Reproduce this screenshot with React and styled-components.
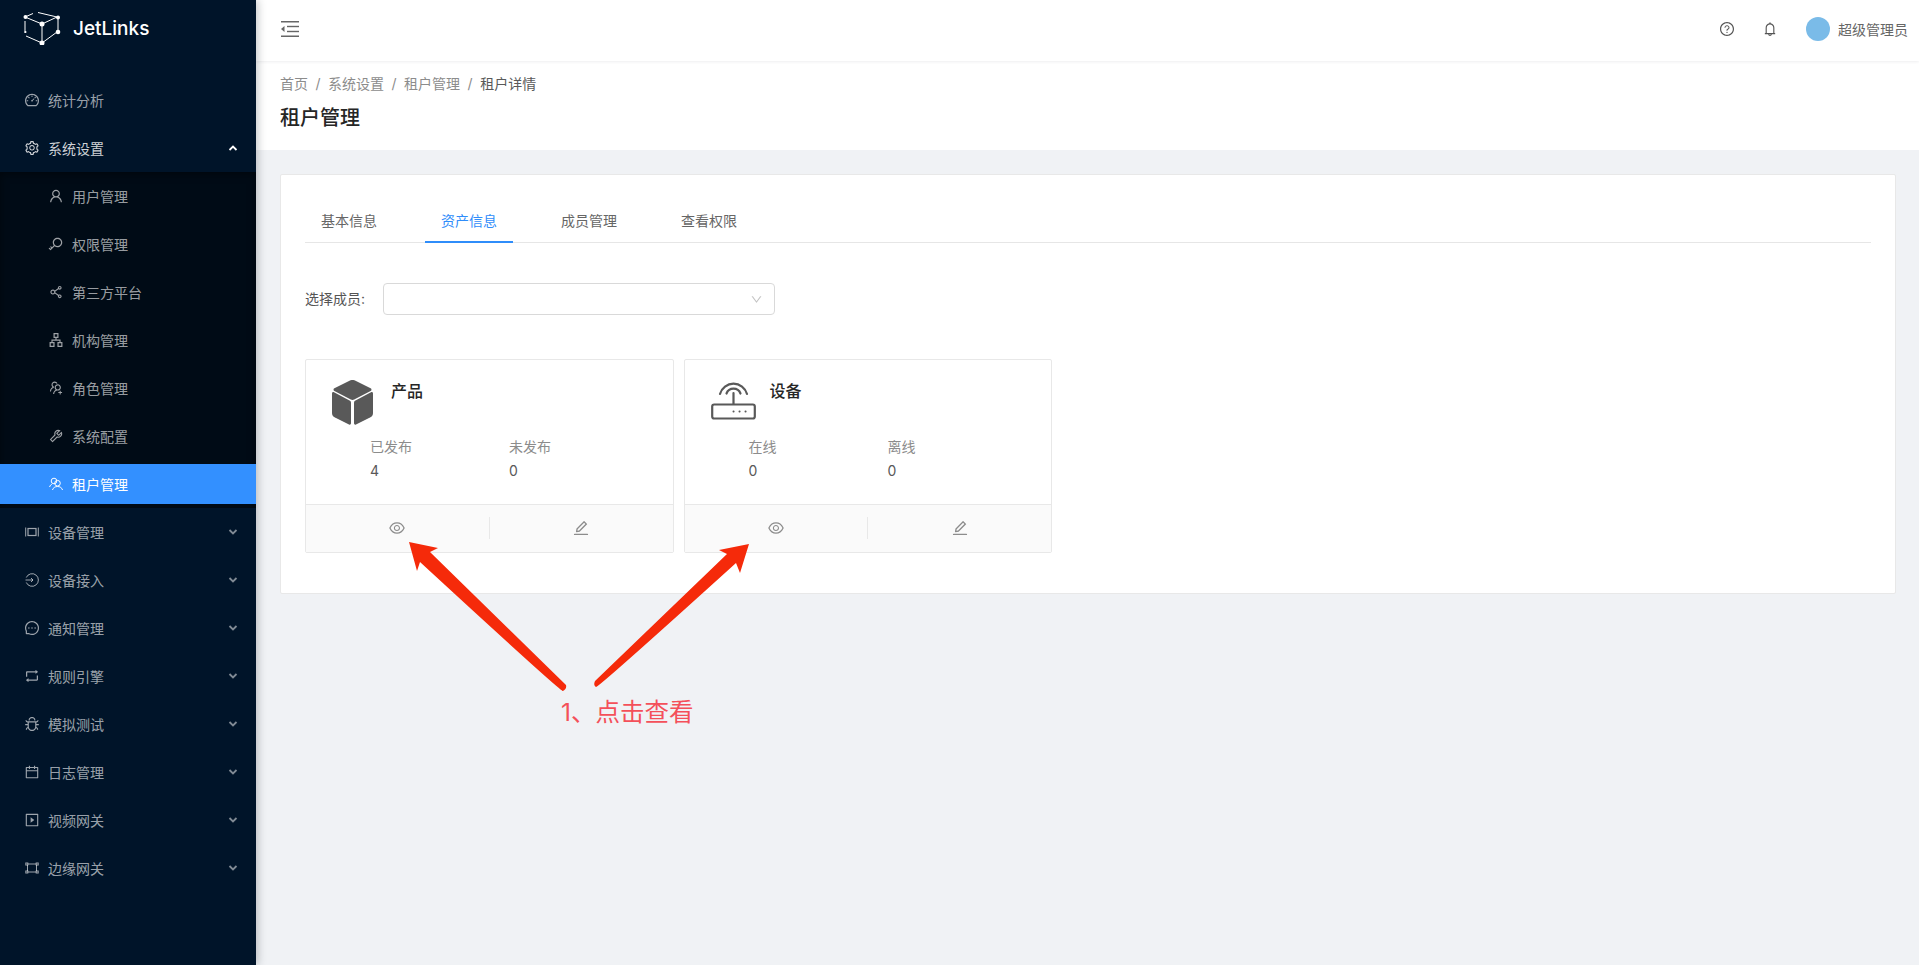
import React from 'react';
import styled, { createGlobalStyle } from 'styled-components';
import {
  AiOutlineDashboard, AiOutlineSetting, AiOutlineUser, AiOutlineKey, AiOutlineShareAlt,
  AiOutlineApartment, AiOutlineUsergroupAdd, AiOutlineTool, AiOutlineMessage, AiOutlineRetweet,
  AiOutlineBug, AiOutlineCalendar, AiOutlinePlaySquare, AiOutlineQuestionCircle, AiOutlineBell,
  AiOutlineEye, AiOutlineEdit, AiOutlineDown,
} from 'react-icons/ai';

const FONT = `"Inter", "Liberation Sans", "Noto Sans CJK SC", sans-serif`;

const Global = createGlobalStyle`
  html, body { margin: 0; padding: 0; height: 100%; overflow: hidden; }
  body { font-family: ${FONT}; background: #f0f2f5; }
  #root { height: 100%; }
  * { box-sizing: border-box; }
`;

const Shell = styled.div`
  position: relative;
  display: flex;
  width: 1919px;
  height: 965px;
  overflow: hidden;
`;

const Sider = styled.aside`
  width: 256px;
  flex: none;
  background: #001429;
  box-shadow: 2px 0 8px rgba(29, 35, 41, 0.25);
  position: relative;
  z-index: 2;
`;

const Logo = styled.div`
  height: 60px;
  padding: 11px 0 0 23px;
  display: flex;
  align-items: flex-start;
  gap: 12px;
  color: #fff;
  font-size: 19px;
  font-weight: 500;
`;

const LogoText = styled.span`
  line-height: 35px;
`;

const Menu = styled.nav`
  padding-top: 20px;
`;

const Item = styled.div`
  height: 40px;
  margin: 0 0 8px;
  display: flex;
  align-items: center;
  padding-left: ${p => (p.$sub ? 48 : 24)}px;
  padding-right: 18px;
  font-size: 14px;
  color: ${p => (p.$active ? '#fff' : p.$open ? 'rgba(255,255,255,0.82)' : 'rgba(255,255,255,0.62)')};
  background: ${p => (p.$active ? '#3390ff' : 'transparent')};
  svg.lead { width: 16px; height: 16px; flex: none; margin-right: 8px; }
`;

const Label = styled.span`
  flex: 1;
  white-space: nowrap;
`;

const SubList = styled.div`
  background: #000b16;
  box-shadow: inset 0 2px 8px rgba(0, 0, 0, 0.45);
  margin: -4px 0 4px;
  padding: 4px 0;
  & > div { margin-bottom: 8px; }
  & > div:last-child { margin-bottom: 0; }
`;

const Chevron = styled.span`
  display: flex;
  color: ${p => (p.$open ? '#fff' : 'rgba(255,255,255,0.5)')};
`;

const Main = styled.div`
  flex: 1;
  min-width: 0;
  display: flex;
  flex-direction: column;
`;

const Header = styled.header`
  height: 61px;
  flex: none;
  background: #fff;
  box-shadow: 0 1px 3px rgba(0, 21, 41, 0.07);
  display: flex;
  align-items: center;
  padding: 0 11px 3px 25px;
  position: relative;
  z-index: 1;
`;

const Spacer = styled.div`
  flex: 1;
`;

const HeaderIcon = styled.span`
  display: flex;
  width: 16px;
  justify-content: center;
  font-size: ${p => p.$size || 16}px;
  color: #555;
  margin-right: 27px;
`;

const Avatar = styled.span`
  width: 24px;
  height: 24px;
  border-radius: 50%;
  background: #7abbe8;
  margin-left: 1px;
  margin-right: 8px;
`;

const UserName = styled.span`
  font-size: 14px;
  color: #666;
`;

const PageHead = styled.div`
  height: 89px;
  flex: none;
  background: #fff;
  padding: 13px 24px 0;
`;

const Crumbs = styled.div`
  display: flex;
  align-items: center;
  font-size: 14px;
  line-height: 20px;
  color: #8c8c8c;
`;

const Sep = styled.span`
  margin: 0 7.5px;
  color: #8c8c8c;
`;

const CrumbLast = styled.span`
  color: #595959;
`;

const PageTitle = styled.div`
  font-size: 20px;
  font-weight: 500;
  line-height: 28px;
  margin-top: 10px;
  color: #262626;
`;

const Content = styled.main`
  flex: 1;
  padding: 24px 23px 0 24px;
`;

const Panel = styled.section`
  height: 420px;
  background: #fff;
  border: 1px solid #e8e8e8;
  border-radius: 2px;
  padding: 24px 24px;
`;

const Tabs = styled.div`
  display: flex;
  height: 44px;
  border-bottom: 1px solid #e6e6e6;
`;

const Tab = styled.div`
  width: 88px;
  margin-right: 32px;
  margin-bottom: -1px;
  display: flex;
  justify-content: center;
  align-items: center;
  font-size: 14px;
  color: ${p => (p.$active ? '#2f8dfa' : '#666')};
  border-bottom: 2px solid ${p => (p.$active ? '#2f8dfa' : 'transparent')};
`;

const FilterRow = styled.div`
  display: flex;
  align-items: center;
  margin-top: 40px;
  font-size: 14px;
  color: #555;
`;

const FilterLabel = styled.span`
  width: 78px;
  white-space: nowrap;
  padding-bottom: 2px;
`;

const Select = styled.div`
  width: 392px;
  height: 32px;
  border: 1px solid #d9d9d9;
  border-radius: 4px;
  background: #fff;
  display: flex;
  justify-content: flex-end;
  align-items: center;
  padding-right: 11px;
  color: #c4c4c4;
  font-size: 13px;
`;

const Cards = styled.div`
  display: flex;
  gap: 10px;
  margin-top: 44px;
`;

const Card = styled.article`
  width: 368.5px;
  height: 194px;
  border: 1px solid #e8e8e8;
  border-radius: 2px;
  display: flex;
  flex-direction: column;
`;

const CardBody = styled.div`
  flex: 1;
  padding: 20px 0 0 26px;
  position: relative;
`;

const CardTop = styled.div`
  display: flex;
  height: 57px;
  align-items: flex-start;
`;

const CardIcon = styled.div`
  width: 59px;
  flex: none;
  display: flex;
`;

const CardTitle = styled.div`
  font-size: 16px;
  font-weight: 500;
  color: #262626;
  line-height: 22px;
`;

const Stats = styled.div`
  display: flex;
  margin-left: 38px;
`;

const Stat = styled.div`
  width: 139px;
`;

const StatLabel = styled.div`
  font-size: 14px;
  line-height: 20px;
  color: #8c8c8c;
`;

const StatValue = styled.div`
  font-size: 14px;
  line-height: 20px;
  margin-top: 4px;
  color: #595959;
`;

const Actions = styled.div`
  height: 48px;
  flex: none;
  background: #fafafa;
  border-top: 1px solid #e8e8e8;
  display: flex;
  align-items: center;
  padding-bottom: 2px;
`;

const Action = styled.div`
  flex: 1;
  height: 22px;
  display: flex;
  justify-content: center;
  align-items: center;
  font-size: 18px;
  color: #8c8c8c;
  & + & { border-left: 1px solid #e8e8e8; }
`;

const Overlay = styled.svg`
  position: absolute;
  inset: 0;
  z-index: 3;
  pointer-events: none;
`;

const Note = styled.div`
  position: absolute;
  left: 561px;
  top: 694px;
  z-index: 3;
  font-size: 24.5px;
  line-height: 36px;
  color: #f4505a;
  white-space: nowrap;
`;

const Line = ({ children }) => (
  <svg className="lead" viewBox="-1 -1 16 16" fill="none" stroke="currentColor" strokeWidth="1">{children}</svg>
);

const Up = () => (
  <svg width="10" height="8" viewBox="0 0 10 8" fill="none" stroke="currentColor" strokeWidth="1.8"><path d="M1.5 6 5 2.5 8.500 6" /></svg>
);
const Dn = () => (
  <svg width="10" height="8" viewBox="0 0 10 8" fill="none" stroke="currentColor" strokeWidth="1.8"><path d="M1.5 2 5 5.500 8.500 2" /></svg>
);

const Logomark = () => (
  <svg width="38" height="34" viewBox="0 0 38 34" fill="none" stroke="#fff" strokeWidth="1">
    <path d="M2 6 10 2.500M15 1.500 34 6M2 6 19 13 34 6M19 13V32M2 10V22M3 25 19 32 34 21M35 7V20" />
    <g fill="#fff" stroke="none">
      <circle cx="2.500" cy="6" r="2" /><circle cx="19" cy="13" r="2.500" /><circle cx="35" cy="6.500" r="2" />
      <circle cx="35" cy="21" r="2.300" /><circle cx="19" cy="32" r="2.500" /><circle cx="2.500" cy="21" r="1" />
    </g>
  </svg>
);

const TenantIcon = () => (
  <Line>
    <circle cx="5" cy="4" r="2.800" /><circle cx="8.500" cy="6.200" r="2.800" />
    <path d="M.6 10C1 8.500 2 7.500 3 7.200M3.500 13C4 10.800 6 9.500 8.500 9.500S13 10.800 13.500 13" />
  </Line>
);
const DeviceIcon = () => (
  <Line>
    <path d="M.7 2.500V11.500M13.300 2.500V11.500" />
    <rect x="3" y="3.500" width="8" height="7" strokeWidth="1.200" />
  </Line>
);
const AccessIcon = () => (
  <Line>
    <path d="M1.300 4.500A6.300 6.300 0 1 1 1.300 9.500M.5 7H8M6 5 8 7 6 9" />
  </Line>
);
const EdgeIcon = () => (
  <Line>
    <path d="M2.800 3H11.200M2.800 11H11.200M2.500 4V10M11.500 4V10" />
    <rect x=".8" y="2" width="2" height="2" /><rect x="11.200" y="2" width="2" height="2" />
    <rect x=".8" y="10" width="2" height="2" /><rect x="11.200" y="10" width="2" height="2" />
  </Line>
);

const CubeIcon = () => (
  <svg width="41" height="45" viewBox="0 0 41 45" fill="#595959">
    <path d="M17.500.8a6 6 0 0 1 6 0L38.600 8.300c1.200.7 1.200 2 0 2.700L22.200 19.500a3.500 3.500 0 0 1-3.400 0L2.400 11c-1.200-.7-1.200-2 0-2.700Z" />
    <path d="M0 13.500c0-1.100 1-1.700 2-1.200L18 20.700c.7.400 1 1 1 1.800V43.300c0 1.100-1 1.700-2 1.200L3 37.500C1 36.500 0 35 0 33Z" />
    <path d="M41 13.500c0-1.100-1-1.700-2-1.200L23 20.700c-.7.400-1 1-1 1.800V43.300c0 1.100 1 1.700 2 1.200L38 37.500C40 36.500 41 35 41 33Z" />
  </svg>
);

const RouterIcon = () => (
  <svg width="45" height="40" viewBox="0 0 45 40" fill="none" stroke="#595959" strokeWidth="2.200" strokeLinecap="round">
    <rect x="1.200" y="24.500" width="42.600" height="14" rx="2" />
    <path d="M22.500 13V24M15.500 13.500a7.500 7.500 0 0 1 14 0M9 14A14 14 0 0 1 36 14" />
    <path d="M22.500 31.500h.1M28.500 31.500h.1M34.500 31.500h.1" strokeWidth="2" />
  </svg>
);

const TriggerIcon = () => (
  <svg width="18" height="16" viewBox="0 0 18 16" fill="#666">
    <rect y="0" width="18" height="1.500" /><rect y="14.500" width="18" height="1.500" />
    <rect x="6" y="4.800" width="12" height="1.400" /><rect x="6" y="9.800" width="12" height="1.400" />
    <path d="M0 8 3.500 5V11Z" />
  </svg>
);

const topMenu = [
  ['设备管理', <DeviceIcon />],
  ['设备接入', <AccessIcon />],
  ['通知管理', <AiOutlineMessage className="lead" />],
  ['规则引擎', <AiOutlineRetweet className="lead" />],
  ['模拟测试', <AiOutlineBug className="lead" />],
  ['日志管理', <AiOutlineCalendar className="lead" />],
  ['视频网关', <AiOutlinePlaySquare className="lead" />],
  ['边缘网关', <EdgeIcon />],
];

const subMenu = [
  ['用户管理', <AiOutlineUser className="lead" />],
  ['权限管理', <AiOutlineKey className="lead" />],
  ['第三方平台', <AiOutlineShareAlt className="lead" />],
  ['机构管理', <AiOutlineApartment className="lead" />],
  ['角色管理', <AiOutlineUsergroupAdd className="lead" />],
  ['系统配置', <AiOutlineTool className="lead" />],
  ['租户管理', <TenantIcon />, true],
];

const cards = [
  { title: '产品', icon: <CubeIcon />, stats: [['已发布', 4], ['未发布', 0]] },
  { title: '设备', icon: <RouterIcon />, stats: [['在线', 0], ['离线', 0]] },
];

export default function App() {
  return (
    <Shell>
      <Global />
      <Sider>
        <Logo>
          <Logomark />
          <LogoText>JetLinks</LogoText>
        </Logo>
        <Menu>
          <Item><AiOutlineDashboard className="lead" /><Label>统计分析</Label></Item>
          <Item $open><AiOutlineSetting className="lead" /><Label>系统设置</Label><Chevron $open><Up /></Chevron></Item>
          <SubList>
            {subMenu.map(([t, ic, active]) => (
              <Item key={t} $sub $active={active}>{ic}<Label>{t}</Label></Item>
            ))}
          </SubList>
          {topMenu.map(([t, ic]) => (
            <Item key={t}>{ic}<Label>{t}</Label><Chevron><Dn /></Chevron></Item>
          ))}
        </Menu>
      </Sider>
      <Main>
        <Header>
          <TriggerIcon />
          <Spacer />
          <HeaderIcon><AiOutlineQuestionCircle /></HeaderIcon>
          <HeaderIcon $size={20}><AiOutlineBell /></HeaderIcon>
          <Avatar />
          <UserName>超级管理员</UserName>
        </Header>
        <PageHead>
          <Crumbs>
            <span>首页</span><Sep>/</Sep>
            <span>系统设置</span><Sep>/</Sep>
            <span>租户管理</span><Sep>/</Sep>
            <CrumbLast>租户详情</CrumbLast>
          </Crumbs>
          <PageTitle>租户管理</PageTitle>
        </PageHead>
        <Content>
          <Panel>
            <Tabs>
              <Tab>基本信息</Tab>
              <Tab $active>资产信息</Tab>
              <Tab>成员管理</Tab>
              <Tab>查看权限</Tab>
            </Tabs>
            <FilterRow>
              <FilterLabel>选择成员:</FilterLabel>
              <Select><AiOutlineDown /></Select>
            </FilterRow>
            <Cards>
              {cards.map(c => (
                <Card key={c.title}>
                  <CardBody>
                    <CardTop>
                      <CardIcon>{c.icon}</CardIcon>
                      <CardTitle>{c.title}</CardTitle>
                    </CardTop>
                    <Stats>
                      {c.stats.map(([l, v]) => (
                        <Stat key={l}>
                          <StatLabel>{l}</StatLabel>
                          <StatValue>{v}</StatValue>
                        </Stat>
                      ))}
                    </Stats>
                  </CardBody>
                  <Actions>
                    <Action><AiOutlineEye /></Action>
                    <Action><AiOutlineEdit /></Action>
                  </Actions>
                </Card>
              ))}
            </Cards>
          </Panel>
        </Content>
      </Main>
      <Overlay width="1919" height="965" viewBox="0 0 1919 965">
        <path d="M409 542 438 548 430 552 566 685Q567 689 563 691 560 691 420 562L417 571Z" fill="#f52a0a" />
        <path d="M749 544 719 550 727 554 595 681Q593 685 596 687 599 687 736 563L740 573Z" fill="#f52a0a" />
      </Overlay>
      <Note>1、点击查看</Note>
    </Shell>
  );
}
